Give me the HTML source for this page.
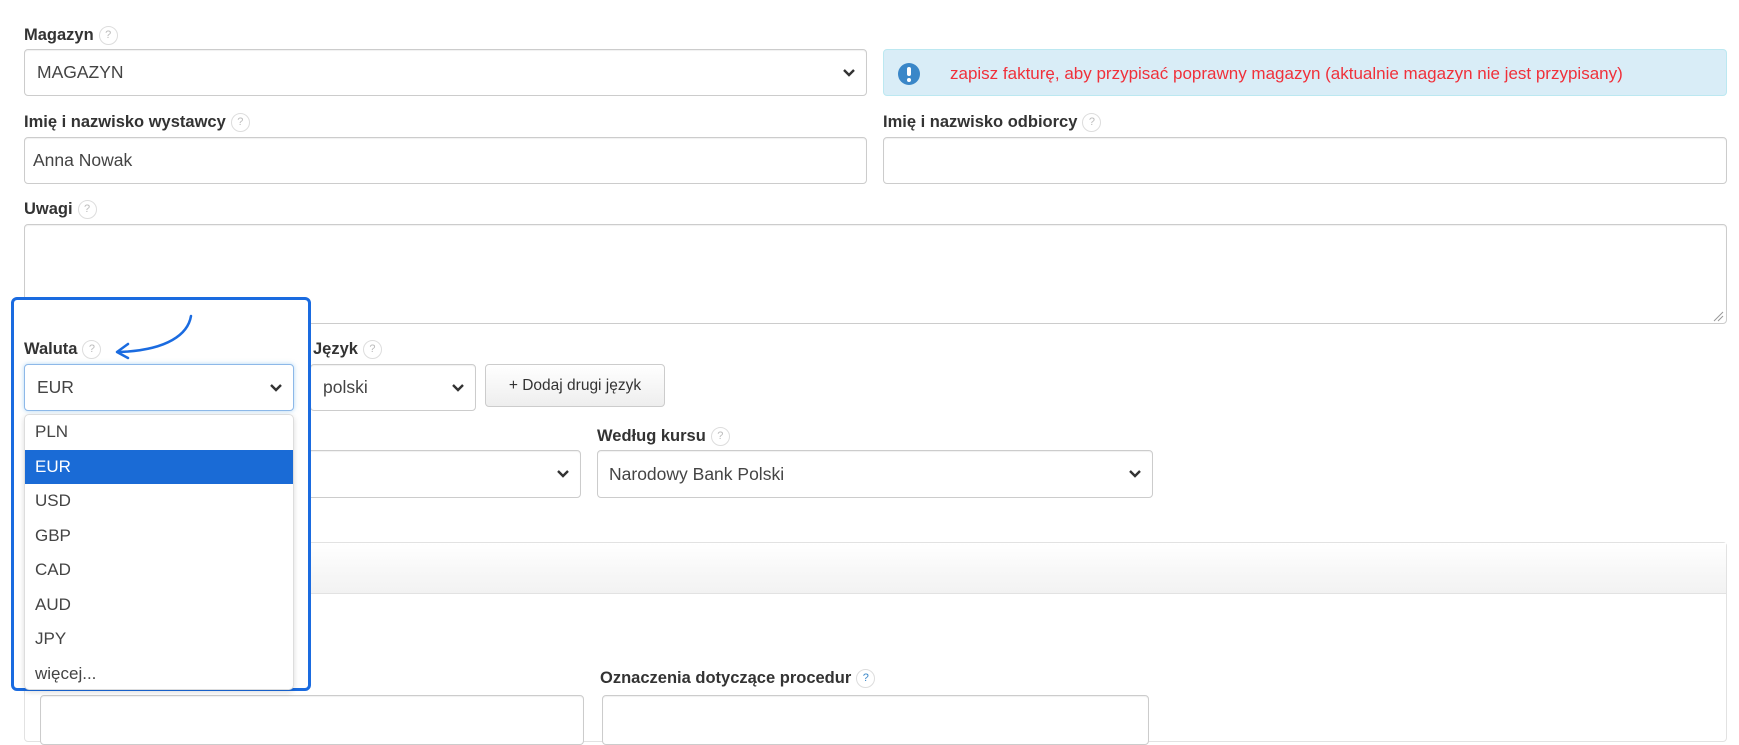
<!DOCTYPE html>
<html><head><meta charset="utf-8"><style>
*{box-sizing:border-box}
body{margin:0;width:1739px;height:731px;overflow:hidden;background:#fff;font-family:"Liberation Sans",Arial,sans-serif;color:#333;position:relative}
.a{position:absolute}
.lbl{position:absolute;font-weight:bold;font-size:16.5px;color:#333;white-space:nowrap}
.q{display:inline-block;width:19px;height:19px;border:1px solid #ddd;border-radius:50%;font-size:11px;color:#bbb;text-align:center;line-height:17px;font-weight:normal;vertical-align:middle;margin-left:5px}
.in{position:absolute;border:1px solid #ccc;border-radius:4px;background:#fff;font-size:17.5px;color:#444;padding-left:8px;display:flex;align-items:center;box-shadow:inset 0 1px 1px rgba(0,0,0,.06)}
.chev{position:absolute;right:10px;top:50%;margin-top:-6px}
.opt{height:34.5px;line-height:34.5px;padding-left:10px;font-size:17px;color:#444}
</style></head><body>
<div class="lbl" style="left:24px;top:26px">Magazyn<span class="q">?</span></div>
<div class="in" style="left:24px;top:49px;width:843px;height:47px;padding-left:12px">MAGAZYN<svg class="chev" width="14" height="12" viewBox="0 0 14 12"><path d="M2 3l5 5 5-5" stroke="#333" stroke-width="2.4" fill="none"/></svg></div>
<div class="a" style="left:883px;top:49px;width:844px;height:47px;background:#d9edf7;border:1px solid #bce8f1;border-radius:4px"></div>
<svg class="a" style="left:897px;top:62px" width="24" height="24"><circle cx="12" cy="12" r="11" fill="#3a87c8"/><rect x="10" y="5" width="4" height="9" rx="2" fill="#fff"/><circle cx="12" cy="18" r="2" fill="#fff"/></svg>
<div class="a" style="left:950px;top:64px;font-size:17px;color:#f0303a;white-space:nowrap">zapisz fakturę, aby przypisać poprawny magazyn (aktualnie magazyn nie jest przypisany)</div>

<div class="lbl" style="left:24px;top:113px">Imię i nazwisko wystawcy<span class="q">?</span></div>
<div class="in" style="left:24px;top:137px;width:843px;height:47px">Anna Nowak</div>
<div class="lbl" style="left:883px;top:113px">Imię i nazwisko odbiorcy<span class="q">?</span></div>
<div class="in" style="left:883px;top:137px;width:844px;height:47px"></div>

<div class="lbl" style="left:24px;top:200px">Uwagi<span class="q">?</span></div>
<div class="in" style="left:24px;top:224px;width:1703px;height:100px"></div>
<svg class="a" style="left:1712px;top:310px" width="12" height="12"><path d="M2 11L11 2M6 11L11 6" stroke="#999" stroke-width="1"/></svg>

<div class="lbl" style="left:313px;top:340px">Język<span class="q">?</span></div>
<div class="in" style="left:310px;top:364px;width:166px;height:47px;padding-left:12px">polski<svg class="chev" width="14" height="12" viewBox="0 0 14 12"><path d="M2 3l5 5 5-5" stroke="#333" stroke-width="2.4" fill="none"/></svg></div>
<div class="a" style="left:485px;top:364px;width:180px;height:43px;border:1px solid #ccc;border-radius:4px;background:linear-gradient(#fff,#eee);font-size:15.5px;color:#333;text-align:center;line-height:41px;white-space:nowrap">+ Dodaj drugi język</div>

<div class="in" style="left:260px;top:450px;width:321px;height:48px"><svg class="chev" width="14" height="12" viewBox="0 0 14 12"><path d="M2 3l5 5 5-5" stroke="#333" stroke-width="2.4" fill="none"/></svg></div>
<div class="lbl" style="left:597px;top:427px">Według kursu<span class="q">?</span></div>
<div class="in" style="left:597px;top:450px;width:556px;height:48px;padding-left:11px">Narodowy Bank Polski<svg class="chev" width="14" height="12" viewBox="0 0 14 12"><path d="M2 3l5 5 5-5" stroke="#333" stroke-width="2.4" fill="none"/></svg></div>

<div class="a" style="left:24px;top:542px;width:1703px;height:200px;border:1px solid #e2e2e2;border-radius:4px"></div>
<div class="a" style="left:25px;top:543px;width:1701px;height:51px;background:linear-gradient(#fff,#f2f2f2);border-bottom:1px solid #e2e2e2"></div>
<div class="lbl" style="left:600px;top:669px">Oznaczenia dotyczące procedur<span class="q" style="color:#3a87c8">?</span></div>
<div class="in" style="left:40px;top:695px;width:544px;height:50px"></div>
<div class="in" style="left:602px;top:695px;width:547px;height:50px"></div>

<div class="a" style="left:11px;top:297px;width:300px;height:394px;background:#fff;border:3px solid #1a6be0;border-radius:6px"></div>
<div class="lbl" style="left:24px;top:340px">Waluta<span class="q">?</span></div>
<div class="in" style="left:24px;top:364px;width:270px;height:47px;padding-left:12px;border-color:#8db8e8;box-shadow:0 0 5px rgba(102,175,233,.5)">EUR<svg class="chev" width="14" height="12" viewBox="0 0 14 12"><path d="M2 3l5 5 5-5" stroke="#333" stroke-width="2.4" fill="none"/></svg></div>
<div class="a" style="left:24px;top:414px;width:270px;height:276px;border:1px solid #ddd;border-radius:5px;background:#fff;box-shadow:0 2px 6px rgba(0,0,0,.15);overflow:hidden">
<div class="opt">PLN</div><div class="opt" style="background:#1a6bd6;color:#fff">EUR</div><div class="opt">USD</div><div class="opt">GBP</div><div class="opt">CAD</div><div class="opt">AUD</div><div class="opt">JPY</div><div class="opt">więcej...</div>
</div>
<svg class="a" style="left:100px;top:310px" width="100" height="50"><path d="M91 6C88 24 68 40 20 42" stroke="#1a6be0" stroke-width="2.5" fill="none" stroke-linecap="round"/><path d="M28 34L17 42L28 48" stroke="#1a6be0" stroke-width="2.5" fill="none" stroke-linecap="round" stroke-linejoin="round"/></svg>
</body></html>
